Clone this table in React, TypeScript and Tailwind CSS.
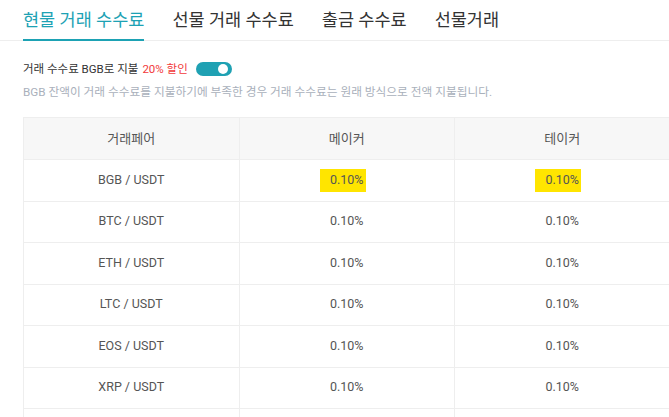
import React from "react";

const tabs = ["현물 거래 수수료", "선물 거래 수수료", "출금 수수료", "선물거래"];

const pairs = ["BGB / USDT", "BTC / USDT", "ETH / USDT", "LTC / USDT", "EOS / USDT", "XRP / USDT"];

const font = { fontFamily: "'Roboto', 'Noto Sans CJK KR', sans-serif" };

const App = () => {
  return (
    <div className="w-[669px] h-[417px] overflow-hidden bg-white" style={font}>
      <div className="flex items-end gap-[28px] pl-[23px] pt-[7px] border-b border-[#eeeeee]">
        {tabs.map((t, i) => (
          <div
            key={t}
            className={
              i === 0
                ? "pb-[6px] text-[17.5px] leading-[26px] text-[#1da2b4] border-b-2 border-[#1da2b4] -mb-px"
                : "pb-[6px] text-[17.5px] leading-[26px] text-[#333333] border-b-2 border-transparent -mb-px"
            }
          >
            {t}
          </div>
        ))}
      </div>

      <div className="pl-[23px] pt-[20px] flex items-center text-[11.5px] leading-[16px] text-[#333333]">
        <span>거래 수수료 BGB로 지불</span>
        <span className="ml-1 text-[#f23a3a]">20% 할인</span>
        <div className="ml-[8px] w-[36px] h-[14px] rounded-full bg-[#1fa1b3] flex items-center justify-end pr-[4px]">
          <div className="w-[10px] h-[10px] rounded-full bg-white" />
        </div>
      </div>
      <div className="pl-[23px] pt-[7px] text-[11.7px] leading-[16px] text-[#a9b0bb]">
        BGB 잔액이 거래 수수료를 지불하기에 부족한 경우 거래 수수료는 원래 방식으로 전액 지불됩니다.
      </div>

      <div className="ml-[23px] mt-[17px] w-[660px] border-t border-l border-[#eeeeee]">
        <div className="flex h-[42px] bg-[#f7f7f7] border-b border-[#eeeeee] text-[13px] text-[#555555]">
          {["거래페어", "메이커", "테이커"].map((h) => (
            <div key={h} className="w-[215.5px] shrink-0 flex items-center justify-center border-r border-[#eeeeee]">
              {h}
            </div>
          ))}
        </div>
        {pairs.map((p, i) => (
          <div key={p} className="flex h-[41.5px] border-b border-[#eeeeee] text-[12.5px] text-[#555555]">
            <div className="w-[215.5px] shrink-0 flex items-center justify-center border-r border-[#eeeeee]">{p}</div>
            <div className="w-[215.5px] shrink-0 flex items-center justify-center border-r border-[#eeeeee]">
              <span className={i === 0 ? "bg-[#ffe500] h-[23px] pl-[10px] pr-[2px] flex items-center -ml-[8px]" : ""}>0.10%</span>
            </div>
            <div className="w-[215.5px] shrink-0 flex items-center justify-center border-r border-[#eeeeee]">
              <span className={i === 0 ? "bg-[#ffe500] h-[23px] pl-[10px] pr-[2px] flex items-center -ml-[8px]" : ""}>0.10%</span>
            </div>
          </div>
        ))}
        {/* next row, scrolled below the fold */}
        <div className="flex h-[41.5px]">
          <div className="w-[215.5px] shrink-0 border-r border-[#eeeeee]" />
          <div className="w-[215.5px] shrink-0 border-r border-[#eeeeee]" />
          <div className="w-[215.5px] shrink-0 border-r border-[#eeeeee]" />
        </div>
      </div>
    </div>
  );
};

export default App;
